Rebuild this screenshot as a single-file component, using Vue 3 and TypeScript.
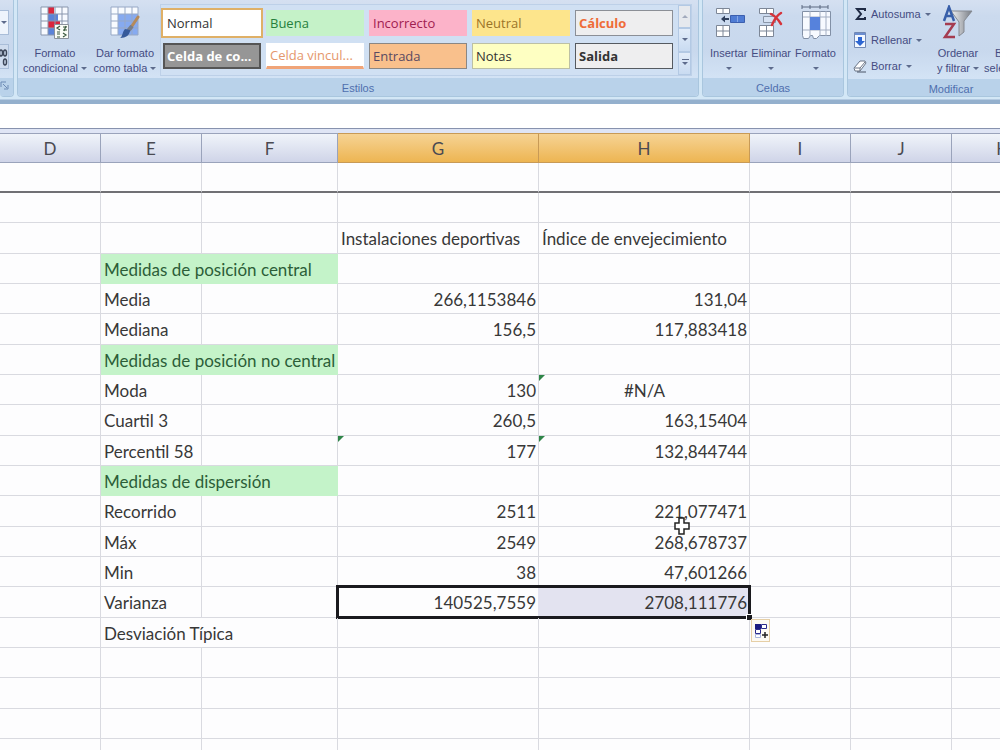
<script setup lang="ts">
import { ref } from 'vue'

interface CellStyle {
  name: string
  kind: string
}
interface Row {
  label?: string
  wide?: boolean
  head?: boolean
  g?: string
  h?: string
  text?: boolean
  center?: boolean
  flagG?: boolean
  flagH?: boolean
  selected?: boolean
  pointer?: boolean
  rule?: boolean
}

const styles: CellStyle[] = [
  { name: 'Normal', kind: 'normal' },
  { name: 'Buena', kind: 'good' },
  { name: 'Incorrecto', kind: 'bad' },
  { name: 'Neutral', kind: 'neutral' },
  { name: 'Cálculo', kind: 'calc' },
  { name: 'Celda de co...', kind: 'check' },
  { name: 'Celda vincul...', kind: 'linked' },
  { name: 'Entrada', kind: 'input' },
  { name: 'Notas', kind: 'notes' },
  { name: 'Salida', kind: 'output' },
]
const activeStyle = ref('Normal')

const columns = ['D', 'E', 'F', 'G', 'H', 'I', 'J', 'K']
const rows: Row[] = [
  { rule: true },
  {},
  { g: 'Instalaciones deportivas', h: 'Índice de envejecimiento', text: true },
  { label: 'Medidas de posición central', head: true },
  { label: 'Media', g: '266,1153846', h: '131,04' },
  { label: 'Mediana', g: '156,5', h: '117,883418' },
  { label: 'Medidas de posición no central', head: true },
  { label: 'Moda', g: '130', h: '#N/A', center: true, flagH: true },
  { label: 'Cuartil 3', g: '260,5', h: '163,15404' },
  { label: 'Percentil 58', g: '177', h: '132,844744', flagG: true, flagH: true },
  { label: 'Medidas de dispersión', head: true },
  { label: 'Recorrido', g: '2511', h: '221,077471', pointer: true },
  { label: 'Máx', g: '2549', h: '268,678737' },
  { label: 'Min', g: '38', h: '47,601266' },
  { label: 'Varianza', g: '140525,7559', h: '2708,111776', selected: true },
  { label: 'Desviación Típica', wide: true },
  {},
  {},
  {},
  {},
]
</script>

<template>
  <main class="app">
    <header class="ribbon">
      <section class="group edge">
        <div class="tools">
          <button class="stub" aria-label="Formato de número"><i class="caret"></i></button>
          <button class="stub digits" aria-label="Disminuir decimales">
            <svg width="8" height="20" viewBox="0 0 8 20" fill="none" stroke="#3c4658" stroke-width="1.5"><ellipse cx="1" cy="6" rx="1.5" ry="3" /><ellipse cx="5" cy="6" rx="1.500" ry="3" /><ellipse cx="5" cy="15" rx="1.500" ry="3" /></svg>
          </button>
        </div>
        <h2>
          <svg width="9" height="14" viewBox="0 0 9 14" fill="none" stroke="#6d8bb5"><path d="M1 9V4h5M3 6l4 4M8 7v4H4" /></svg>
        </h2>
      </section>

      <section class="group styles">
        <div class="tools">
          <button class="big conditional">
            <svg width="30" height="34" viewBox="0 0 30 34">
              <path d="M1 1h27v28H1z" fill="#f7faff" />
              <path d="M8 1h6v7H8zM8 15h12v7H8z" fill="#d9273d" />
              <path d="M8 8h10v7H8zM8 22h7v7H8z" fill="#5b83d8" />
              <path d="M1 1h27v28H1zM8 1v28M15 1v28M22 1v28M1 8h27M1 15h27M1 22h27" fill="none" stroke="#8996ad" />
              <path d="M14.5 18.500h14v14h-14z" fill="#fbfdf7" stroke="#8b929c" />
              <path d="M20 20l-3 2 3 2M17 26h3M23 21h4M23 24h4M26 20l-2 5M17 28h3M17 31h3M23 27l3 2-3 2" fill="none" stroke="#39583d" stroke-width="1.200" />
            </svg>
            <span>Formato<br>condicional <i class="caret"></i></span>
          </button>
          <button class="big table-format">
            <svg width="30" height="34" viewBox="0 0 30 34">
              <path d="M1 1h27v28H1z" fill="#f8fbff" />
              <path d="M8 8h20v21H8z" fill="#86aaf0" />
              <path d="M1 1h27v28H1zM8 1v28M15 1v28M22 1v28M1 8h27M1 15h27M1 22h27" fill="none" stroke="#97a8c5" />
              <path d="M28 11L20 23" stroke="#b58a5a" stroke-width="3" stroke-linecap="round" />
              <path d="M22 20l-4 5" stroke="#777e8a" stroke-width="4" />
              <path d="M20 24c0 5-4 8-10 8 3-2 2-6 5-9z" fill="#35599a" />
            </svg>
            <span>Dar formato<br>como tabla <i class="caret"></i></span>
          </button>
          <div class="gallery">
            <div class="swatches">
              <button
                v-for="s in styles"
                :key="s.name"
                class="swatch"
                :class="[s.kind, { active: activeStyle === s.name }]"
                @click="activeStyle = s.name"
              >{{ s.name }}</button>
            </div>
            <div class="scroller">
              <button aria-label="Subir" class="faded"><i class="caret up"></i></button>
              <button aria-label="Bajar"><i class="caret"></i></button>
              <button aria-label="Más estilos" class="more"><i class="caret"></i></button>
            </div>
          </div>
        </div>
        <h2>Estilos</h2>
      </section>

      <section class="group cells">
        <div class="tools">
          <button class="big">
            <svg width="32" height="34" viewBox="0 0 32 34">
              <path d="M3.500 2.500h13v5h-13zM3.500 19.500h13v11h-13z" fill="#fff" stroke="#7d8797" />
              <path d="M10 2.500v5M10 19.500v11M3.500 25h13" stroke="#7d8797" />
              <path d="M17.500 9.500h14v7h-14z" fill="#4f7cd4" stroke="#3c5fae" />
              <path d="M24.500 10v6" stroke="#86a8e8" />
              <path d="M16 13h-5" stroke="#2f3f5c" stroke-width="2" /><path d="M12 9.500v7L8 13z" fill="#2f3f5c" />
            </svg>
            <span>Insertar<br><i class="caret"></i></span>
          </button>
          <button class="big">
            <svg width="32" height="34" viewBox="0 0 32 34">
              <path d="M4.500 2.500h14v5h-14zM4.500 19.500h14v11h-14z" fill="#fff" stroke="#7d8797" />
              <path d="M11.500 2.500v5M11.500 19.500v11M4.500 25h14" stroke="#7d8797" />
              <path d="M8.500 10.500h12v6h-12z" fill="#d6e2f3" stroke="#8995a7" />
              <path d="M16 8c4 2 7 5 10 10M26 7c-5 3-7 7-9 12" fill="none" stroke="#d5333a" stroke-width="2.500" stroke-linecap="round" />
            </svg>
            <span>Eliminar<br><i class="caret"></i></span>
          </button>
          <button class="big">
            <svg width="32" height="36" viewBox="0 0 32 36">
              <path d="M2 2h26M2 0v4M10 0v4M20 0v4M28 0v4" stroke="#5b6980" />
              <path d="M2.500 6.500h28v24h-11l-3 3h-3l-1-3h-2l-2 3h-5l-1-3z" fill="#f7faff" stroke="#8290a6" />
              <path d="M10 6v25M20 6v25M26 6v25M3 12h27M3 25h27" stroke="#a3aec2" />
              <path d="M10 12h10v13H10z" fill="#5682dc" />
            </svg>
            <span>Formato<br><i class="caret"></i></span>
          </button>
        </div>
        <h2>Celdas</h2>
      </section>

      <section class="group modify">
        <div class="tools">
          <div class="stack">
            <button>
              <svg width="14" height="16" viewBox="0 0 14 16"><path d="M12 5V3H4l4 5-4 5h8v-2" fill="none" stroke="#202b45" stroke-width="2" /></svg>
              Autosuma <i class="caret"></i>
            </button>
            <button>
              <svg width="14" height="18" viewBox="0 0 14 18"><path d="M1.500 1.500h11v15h-11z" fill="#f3f8ff" stroke="#7188b4" /><path d="M2 2h10v2H2z" fill="#6c8ed0" /><path d="M5 6h4v4h3l-5 5-5-5h3z" fill="#2d66d2" /></svg>
              Rellenar <i class="caret"></i>
            </button>
            <button>
              <svg width="14" height="16" viewBox="0 0 14 16"><path d="M1 10l6-7h5l1 2-6 8H2z" fill="#fff" stroke="#6a7586" /><path d="M2 10h5l5-6M7 10v3" fill="none" stroke="#6a7586" /><path d="M4 14h9" stroke="#4a5466" /></svg>
              Borrar <i class="caret"></i>
            </button>
          </div>
          <button class="big sort">
            <svg width="32" height="36" viewBox="0 0 32 36">
              <defs><linearGradient id="funnel"><stop offset="0" stop-color="#f2f3f5" /><stop offset="1" stop-color="#777c84" /></linearGradient></defs>
              <path d="M9 6h21l-8 10v11l-5 4V17z" fill="url(#funnel)" stroke="#858a92" />
              <path d="M2 16L7 2l5 14M4 11h6" fill="none" stroke="#385fa9" stroke-width="2.500" />
              <path d="M3 19h9L3 32h10" fill="none" stroke="#a53c50" stroke-width="2.500" />
            </svg>
            <span>Ordenar<br>y filtrar <i class="caret"></i></span>
          </button>
          <button class="big find">
            <svg width="32" height="34" viewBox="0 0 32 34"><circle cx="20" cy="15" r="5" fill="#b8cdea" stroke="#48628c" /></svg>
            <span>Buscar y<br>seleccionar <i class="caret"></i></span>
          </button>
        </div>
        <h2>Modificar</h2>
      </section>
    </header>

    <div class="formula-bar"></div>

    <div class="sheet">
      <table>
        <colgroup>
          <col v-for="c in columns" :key="c" :class="'col-' + c">
        </colgroup>
        <thead>
          <tr>
            <th v-for="c in columns" :key="c" scope="col" :class="{ picked: c === 'G' || c === 'H' }">{{ c }}</th>
          </tr>
        </thead>
        <tbody>
          <tr v-for="(r, i) in rows" :key="i" :class="{ rule: r.rule }">
            <td></td>
            <td :colspan="r.head || r.wide ? 2 : 1" :class="{ heading: r.head }">{{ r.label }}</td>
            <td v-if="!r.head && !r.wide"></td>
            <td class="num" :class="{ text: r.text, flag: r.flagG, sel: r.selected, first: r.selected }">{{ r.g }}</td>
            <td class="num" :class="{ text: r.text, center: r.center, flag: r.flagH, sel: r.selected, last: r.selected }">
              {{ r.h }}
              <svg v-if="r.pointer" class="pointer" width="16" height="18" viewBox="0 0 16 18"><path d="M5 1h5v5h5v6h-5v5H5v-5H1V6h4z" fill="#fff" stroke="#222" stroke-width="1.500" /></svg>
              <template v-if="r.selected">
                <i class="handle"></i>
                <button class="autofill" aria-label="Opciones de autorrelleno">
                  <svg width="16" height="18" viewBox="0 0 16 18"><path d="M2 2h6v5H2z" fill="#1b1b80" /><path d="M8.500 2.500h5v4h-5zM2.500 7.500h5v4h-5z" fill="#fff" stroke="#2c2c8c" /><path d="M2.500 12.500h5v3h-5z" fill="#fff" stroke="#a9b5dd" /><path d="M12 10v6M9 13h6" stroke="#222" stroke-width="1.500" /></svg>
                </button>
              </template>
            </td>
            <td></td>
            <td></td>
            <td></td>
          </tr>
        </tbody>
      </table>
    </div>
  </main>
</template>

<style>
body {
  margin: 0;
}
</style>

<style scoped>
.app {
  height: 100vh;
  overflow: hidden;
  display: flex;
  flex-direction: column;
  background: #fdfdfe;
  font-family: Lato, "Noto Sans", sans-serif;
}
button {
  font: inherit;
  color: inherit;
  padding: 0;
  border: 0;
  background: none;
}
.ribbon {
  display: flex;
  gap: 3px;
  height: 100px;
  flex: none;
  box-sizing: border-box;
  padding-bottom: 2px;
  overflow: hidden;
  background: #d3e7f6;
  border-bottom: 1px solid #b5cbe2;
  color: #454c82;
  font-family: "Liberation Sans", Arial, sans-serif;
  font-size: 11px;
  line-height: 15px;
}
.group {
  flex: none;
  display: flex;
  flex-direction: column;
  box-sizing: border-box;
  border: solid #a9c6de;
  border-width: 0 1px 1px;
  border-radius: 0 0 4px 4px;
  background: linear-gradient(#d5e0f1 0, #cbdaee 16px, #c8d8ed 50px, #d3e3f5 79px);
  overflow: hidden;
}
.group h2 {
  margin: 0;
  height: 18px;
  font-size: 11px;
  line-height: 20px;
  font-weight: 400;
  text-align: center;
  color: #4f6fae;
  background: #b9d2ea;
}
.tools {
  flex: 1;
  display: flex;
}
.edge {
  width: 14px;
  border-left: 0;
}
.edge .tools {
  flex-direction: column;
  gap: 9px;
  padding-top: 10px;
}
.stub {
  width: 9px;
  height: 25px;
  border: 1px solid #a9bdd8;
  border-left: 0;
  background: #eef4fc;
}
.digits {
  background: #cfdcee;
}
.edge svg {
  display: block;
}
.styles {
  width: 682px;
}
.cells {
  width: 142px;
}
.modify {
  width: 208px;
}
.big {
  display: flex;
  flex-direction: column;
  align-items: center;
  padding-top: 5px;
  white-space: nowrap;
}
.big svg {
  height: 36px;
}
.big span {
  margin-top: 5px;
}
.conditional {
  width: 74px;
}
.table-format {
  width: 66px;
}
.cells .tools {
  justify-content: center;
  gap: 4px;
}
.caret {
  display: inline-block;
  vertical-align: 2px;
  border: 3px solid transparent;
  border-top-color: #5d6b8c;
  border-bottom: 0;
}
.caret.up {
  transform: rotate(180deg);
}
.gallery {
  display: flex;
  gap: 5px;
  margin: 4px 0 2px 2px;
  border: 1px solid #bdd0e8;
  background: #d0e0f3;
}
.swatches {
  display: grid;
  grid-template-columns: repeat(5, 98px);
  grid-template-rows: 26px 26px;
  gap: 7px 5px;
  padding: 5px 0 0 2px;
}
.swatch {
  text-align: left;
  padding-left: 3px;
  font-family: "Open Sans", "Noto Sans", sans-serif;
  font-size: 13px;
  line-height: 22px;
  white-space: nowrap;
  border: 1px solid transparent;
}
.normal { background: #fff; color: #333; }
.good { background: #c5f2c8; color: #26803c; }
.bad { background: #fcb3c9; color: #a02050; }
.neutral { background: #fde58c; color: #9b7428; }
.calc { background: #eeeeef; color: #ef6c38; border-color: #8b8f96; font-weight: 700; }
.check { background: #969696; color: #fff; border: 2px solid #555; font-weight: 700; padding-left: 2px; line-height: 20px; }
.linked { background: #fff; color: #e5976c; border-bottom: 3px solid #f0a478; }
.input { background: #f9c08c; color: #594a62; border-color: #8b8784; }
.notes { background: #feffc2; color: #333; border-color: #bcc0a4; }
.output { background: #eeeeef; color: #333; border-color: #555a60; font-weight: 700; }
.swatch.active {
  outline: 2px solid #dfb067;
  outline-offset: 0;
  border-color: #fff;
}
.scroller {
  display: flex;
  flex-direction: column;
  width: 13px;
}
.scroller button {
  flex: 1;
  display: grid;
  place-content: center;
  border: 1px solid #b3c9e4;
  background: linear-gradient(#e2ecf9, #c9dbf1);
}
.scroller .faded {
  background: #e6e9ee;
}
.faded .caret {
  opacity: 0.5;
}
.more .caret {
  position: relative;
}
.more .caret::before {
  content: "";
  position: absolute;
  left: -3px;
  top: -6px;
  width: 7px;
  height: 1px;
  background: #5d6b8c;
}
.stack {
  width: 85px;
  padding: 1px 0 0 5px;
  display: flex;
  flex-direction: column;
}
.stack button {
  display: flex;
  align-items: center;
  gap: 4px;
  height: 26px;
}
.sort {
  width: 42px;
}
.find {
  width: 76px;
}
.formula-bar {
  flex: none;
  height: 29px;
  box-sizing: border-box;
  border-top: 4px solid #94b0cd;
  border-bottom: 1px solid #8792ae;
  background: #fff;
}
.sheet {
  flex: 1;
  overflow: hidden;
  padding-top: 4px;
  background: #dfe5f5;
}
table {
  width: calc(100% + 53px);
  table-layout: fixed;
  border-collapse: separate;
  border-spacing: 0;
  background: #fdfdfe;
  color: #383838;
  font-size: 17px;
  line-height: 24px;
}
.col-D,
.col-E,
.col-I,
.col-J {
  width: 101px;
}
.col-F {
  width: 136px;
}
.col-G {
  width: 201px;
}
.col-H {
  width: 211px;
}
th {
  height: 30px;
  box-sizing: border-box;
  padding: 2px 0 0;
  font-weight: 400;
  color: #4a4a52;
  background: linear-gradient(#f0f4fa, #cfd4e8);
  border: solid #9aa3bb;
  border-width: 1px 1px 1px 0;
}
th.picked {
  background: linear-gradient(#f6d394, #edb552);
  border-color: #c89a56;
}
td {
  height: 30px;
  box-sizing: border-box;
  padding: 2px 2px 0 3px;
  border: solid #d9dae0;
  border-width: 0 1px 1px 0;
  white-space: nowrap;
  position: relative;
}
tr:nth-child(3n) td {
  height: 31px;
}
.rule td {
  border-bottom: 2px solid #707074;
}
.heading {
  background: #c4f3c9;
  color: #2c5e38;
  border-color: #c4f3c9;
}
.num {
  text-align: right;
}
.text {
  text-align: left;
}
.center {
  text-align: center;
}
.flag::before {
  content: "";
  position: absolute;
  left: 0;
  top: 0;
  border-top: 6px solid #2f8548;
  border-right: 6px solid transparent;
}
.sel::after {
  content: "";
  position: absolute;
  inset: -2px 0 -2px 0;
  border: solid #1a1a1e;
  border-width: 3px 0;
}
.first::after {
  left: -2px;
  right: -1px;
  border-left-width: 3px;
}
.last::after {
  right: -2px;
  border-right-width: 3px;
}
.first {
  border-right-color: #e3e3f0;
}
.last {
  background: #e3e3f0;
}
.pointer {
  position: absolute;
  left: 135px;
  top: 21px;
  z-index: 2;
}
.handle {
  position: absolute;
  right: -3px;
  bottom: -3px;
  width: 5px;
  height: 5px;
  border: solid #fff;
  border-width: 1px 0 0 1px;
  background: #1a1a1e;
  z-index: 2;
}
.autofill {
  position: absolute;
  left: 100%;
  top: 100%;
  margin: 2px 0 0 2px;
  width: 19px;
  height: 23px;
  display: grid;
  place-content: center;
  border: 1px solid #e6cfa6;
  background: #fdfaf3;
  z-index: 2;
}
</style>
